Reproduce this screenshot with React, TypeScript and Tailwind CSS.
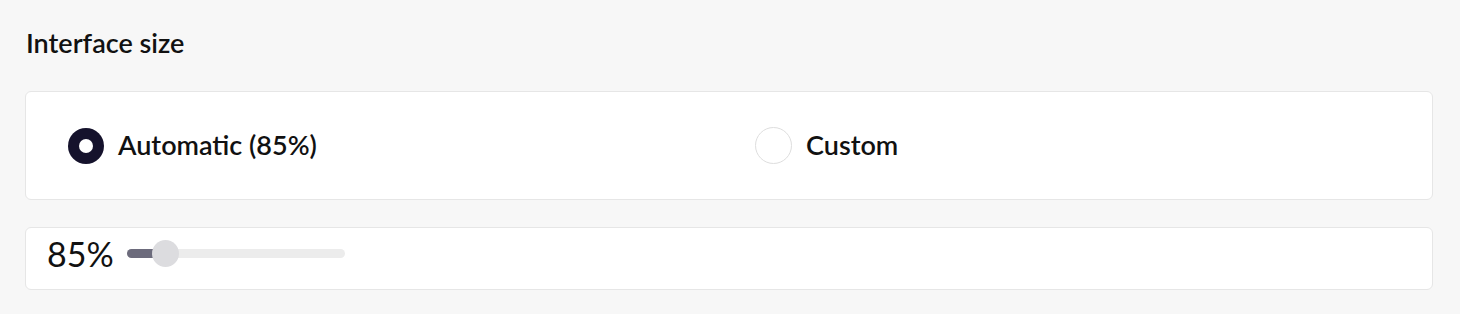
import React from "react";

export default function App() {
  return (
    <div
      className="w-[1460px] h-[314px] bg-[#f7f7f7] pl-[25px] pr-[27px] pt-[27px]"
      style={{ fontFamily: "Lato, 'Noto Sans', sans-serif" }}
    >
      <h2 className="text-[27px] leading-[32px] font-semibold text-[#111] pl-[1px]">Interface size</h2>
      <div className="mt-[32px] h-[109px] bg-white border border-[#e6e6e6] rounded-[6px] grid grid-cols-2 gap-x-[52px] px-[42px] items-center">
        <label className="flex items-center gap-[14px]">
          <span className="w-[36px] h-[36px] rounded-full bg-[#15122c] flex items-center justify-center">
            <span className="w-[14px] h-[14px] rounded-full bg-white" />
          </span>
          <span className="text-[27px] font-semibold text-[#111]">Automatic (85%)</span>
        </label>
        <label className="flex items-center gap-[14px]">
          <span className="w-[37px] h-[37px] rounded-full bg-white border border-[#dedede]" />
          <span className="text-[27px] font-semibold text-[#111]">Custom</span>
        </label>
      </div>
      <div className="mt-[27px] h-[63px] bg-white border border-[#e6e6e6] rounded-[6px] flex items-center pl-[21px] pb-[10px]">
        <span className="text-[34px] text-[#111] leading-none">85%</span>
        <div className="ml-[13px] relative w-[218px] h-[9px] rounded-full bg-[#ececec]">
          <div className="absolute left-0 top-0 h-[9px] w-[32px] rounded-l-full bg-[#6c6b7c]" />
          <div className="absolute left-[25px] top-[-9px] w-[27px] h-[27px] rounded-full bg-[#dcdcdf]" />
        </div>
      </div>
    </div>
  );
}
